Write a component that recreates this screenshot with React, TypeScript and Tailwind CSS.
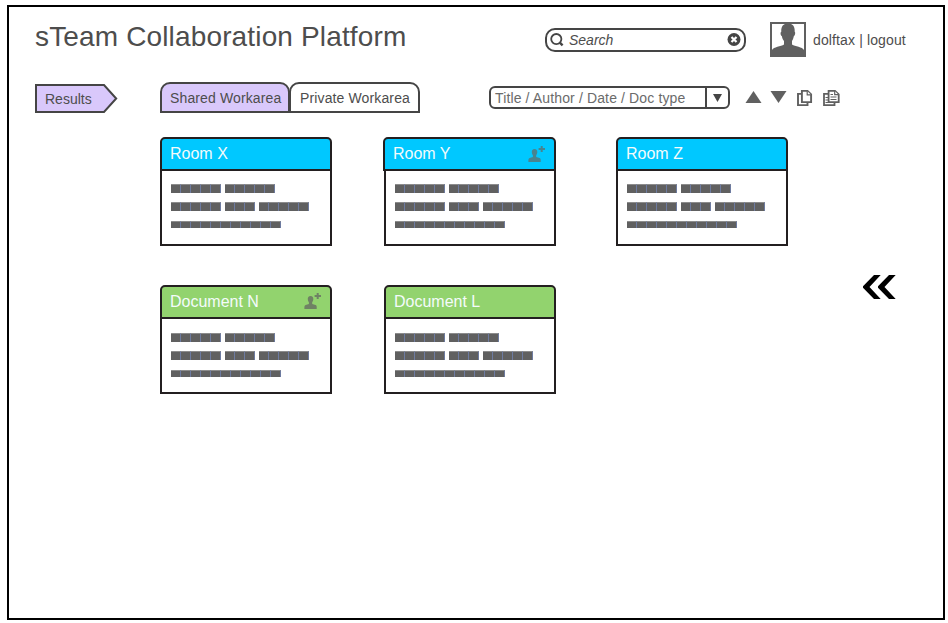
import React from "react";

const BLOCK_ROWS = [[5, 5], [5, 3, 5], [11]];

function Person({ className }: { className: string }) {
  return (
    <svg className={className} width="17" height="17" viewBox="0 0 17 17">
      <path
        fill="currentColor"
        d="M6.5 3C8.6 3 9.5 4.3 9.3 6.2C9.2 7.6 8.6 8.6 8.2 9.2V11L11.6 12C12.4 12.4 12.7 13.1 12.7 14V16H.4V14C.4 13.1.8 12.4 1.6 12L4.9 11V9.2C4.4 8.6 3.9 7.6 3.8 6.2C3.6 4.3 4.6 3 6.5 3Z"
      />
      <path fill="currentColor" d="M12.7 0H14.7V2H17V4H14.7V6H12.7V4H10.6V2H12.7Z" />
    </svg>
  );
}

function Blocks({ low }: { low?: boolean }) {
  return (
    <div className={`flex flex-col pl-[9px] ${low ? "pt-[14px]" : "pt-[13px]"}`}>
      {BLOCK_ROWS.map((words, r) => (
        <div key={r} className={`flex gap-1 ${r === 2 ? "h-[7px] mt-[1px]" : "h-[9px] mb-[9px]"}`}>
          {words.map((n, w) => (
            <div key={w} className="flex">
              {Array.from({ length: n }, (_, i) => (
                <span
                  key={i}
                  className="w-[10px] border-t border-r border-t-[#8c8c8c] border-r-[#6d7ba0] bg-[#606060]"
                />
              ))}
            </div>
          ))}
        </div>
      ))}
    </div>
  );
}

type CardProps = { title: string; green?: boolean; shared?: boolean; wide?: boolean };

function Card({ title, green, shared, wide }: CardProps) {
  return (
    <div className="h-[109px] w-[172px]">
      <div
        className={`flex h-[34px] items-start justify-between rounded-t-[5px] border-2 border-[#231f20] pt-[4px] pr-[9px] pl-[8px] ${
          green ? "bg-[#92d36e]" : "bg-[#00c8ff]"
        } ${wide ? "-ml-px w-[173px]" : ""}`}
      >
        <span className="pt-px text-[16px] leading-[20px] text-[#f4fbfb]">{title}</span>
        {shared && <Person className={green ? "mt-[2px] text-[#6f8264]" : "mt-[3px] text-[#488490]"} />}
      </div>
      <div className="h-[75px] border-x-2 border-b-2 border-[#231f20] bg-white">
        <Blocks low={green} />
      </div>
    </div>
  );
}

export default function App() {
  return (
    <div className="h-[623px] w-[948px] overflow-hidden bg-white pt-[5px] pl-[7px] font-['Liberation_Sans',Arial,sans-serif] text-[14px] text-[#4d4d4d]">
      <div className="h-[615px] w-[938px] border-2 border-black">
        <header className="flex h-[60px] pl-[26px]">
          <h1 className="w-[510px] pt-[14px] text-[28px] leading-[32px] tracking-[0.15px] whitespace-nowrap">
            sTeam Collaboration Platform
          </h1>
          <div className="mt-[21px] flex h-[24px] w-[201px] items-center rounded-[10px] border-2 border-[#454545] pr-[3px] pl-[3px]">
            <svg width="14" height="14" viewBox="0 0 14 14" fill="none" stroke="#454545">
              <circle cx="6.3" cy="6.1" r="5.1" strokeWidth="1.8" />
              <path d="M9.8 9.6L12.6 12.4" strokeWidth="2.4" />
            </svg>
            <span className="ml-[5px] flex-1 leading-[16px] italic">Search</span>
            <svg width="14" height="14" viewBox="0 0 14 14">
              <circle cx="7" cy="6.5" r="6.5" fill="#454545" />
              <path d="M4.5 4L9.5 9M9.5 4L4.5 9" stroke="white" strokeWidth="2.2" />
            </svg>
          </div>
          <svg className="mt-[15px] ml-[24px]" width="36" height="35" viewBox="0 0 36 35">
            <path d="M1 1H35V34H1Z" fill="white" stroke="#606060" strokeWidth="2" />
            <path
              fill="#606060"
              d="M18 1.5C22.7 1.5 25 4.3 24.7 9.7C25.6 10 25.3 13.4 23.9 14C23.4 16.3 22.8 18 22 19V22.5C25 24.7 32.5 24.8 34 28V34H2V28C3.5 24.8 11 24.7 14 22.5V19C13 18 12.2 16.3 11.8 14C10.4 13.4 10.2 10 11.3 9.7C11 4.3 13.3 1.5 18 1.5Z"
            />
          </svg>
          <span className="mt-[25px] ml-[7px] leading-[16px] tracking-[0.13px] whitespace-nowrap">dolftax | logout</span>
        </header>

        <nav className="flex h-[46px] items-start pt-[15px] pl-[26px] tracking-[0.13px]">
          <div className="relative mt-[2px] h-[29px] w-[83px]">
            <svg className="absolute inset-0" width="83" height="29" viewBox="0 0 83 29">
              <path d="M1 1H69L81.2 14.5L69 28H1Z" fill="#d9c8fb" stroke="#454545" strokeWidth="2" />
            </svg>
            <span className="relative block pt-[7px] pl-[10px] leading-[16px] tracking-normal">Results</span>
          </div>
          <div className="ml-[42px] flex h-[31px]">
            <div className="w-[130px] rounded-t-[10px] border-2 border-[#454545] bg-[#d9c8fb] pt-[6px] pl-[8px] leading-[16px] whitespace-nowrap">
              Shared Workarea
            </div>
            <div className="-ml-px w-[131px] rounded-t-[10px] border-2 border-[#454545] bg-white pt-[6px] pl-[9px] leading-[16px] whitespace-nowrap">
              Private Workarea
            </div>
          </div>
          <div className="mt-[4px] ml-[69px] flex h-[23px] w-[241px] rounded-[6px] border-2 border-[#454545]">
            <span className="flex-1 pt-[2px] pl-[4px] leading-[16px] text-[#6b6b6b]">Title / Author / Date / Doc type</span>
            <div className="flex w-[23px] justify-center border-l-2 border-[#454545] pt-[6px]">
              <svg width="9" height="8" viewBox="0 0 9 8">
                <path d="M0 0H9L4.5 8Z" fill="#454545" />
              </svg>
            </div>
          </div>
          <svg className="mt-[9px] ml-[15px]" width="17" height="12" viewBox="0 0 17 12">
            <path d="M.5 12H16.5L8.5 0Z" fill="#606060" />
          </svg>
          <svg className="mt-[9px] ml-[8px]" width="17" height="12" viewBox="0 0 17 12">
            <path d="M.5 0H16.5L8.5 12Z" fill="#606060" />
          </svg>
          <svg className="mt-[8px] ml-[10px]" width="16" height="16" viewBox="0 0 16 16" fill="white" stroke="#606060" strokeWidth="1.9">
            <path d="M4 3.9H1V15.1H10.5V12" />
            <path d="M4.9 .9H10.5L14.1 4.5V12.1H4.9Z" />
            <path d="M10.2 1V4.8H14" strokeWidth="1.2" />
          </svg>
          <svg className="mt-[8px] ml-[10px]" width="17" height="16" viewBox="0 0 17 16" fill="white" stroke="#606060" strokeWidth="1.8">
            <path d="M5 3.9H1V15.1H11.5V12" />
            <path d="M2.5 7.5H5M2.5 10H5M2.5 12.5H5" strokeWidth="1" />
            <path d="M5.6 .9H12L15.7 4.5V12.1H5.6Z" />
            <path d="M11.7 1V4.7H15.5M7.5 4.5H10M7.5 7H13.5M7.5 9.5H13.5" strokeWidth="1.2" />
          </svg>
        </nav>

        <div className="flex pt-[24px] pl-[151px]">
          <div className="flex w-[703px] flex-col gap-[39px]">
            <div className="flex">
              <Card title="Room X" />
              <div className="ml-[52px]">
                <Card title="Room Y" shared wide />
              </div>
              <div className="ml-[60px]">
                <Card title="Room Z" />
              </div>
            </div>
            <div className="flex gap-[52px]">
              <Card title="Document N" green shared />
              <Card title="Document L" green />
            </div>
          </div>
          <svg className="mt-[138px]" width="34" height="24" viewBox="0 0 34 24" fill="black">
            <path d="M11 0H17.7L6.5 12L17.7 24H11L0 12.7V11.3Z" />
            <path d="M26 0H32.7L21.5 12L32.7 24H26L15 12.7V11.3Z" />
          </svg>
        </div>
      </div>
    </div>
  );
}
